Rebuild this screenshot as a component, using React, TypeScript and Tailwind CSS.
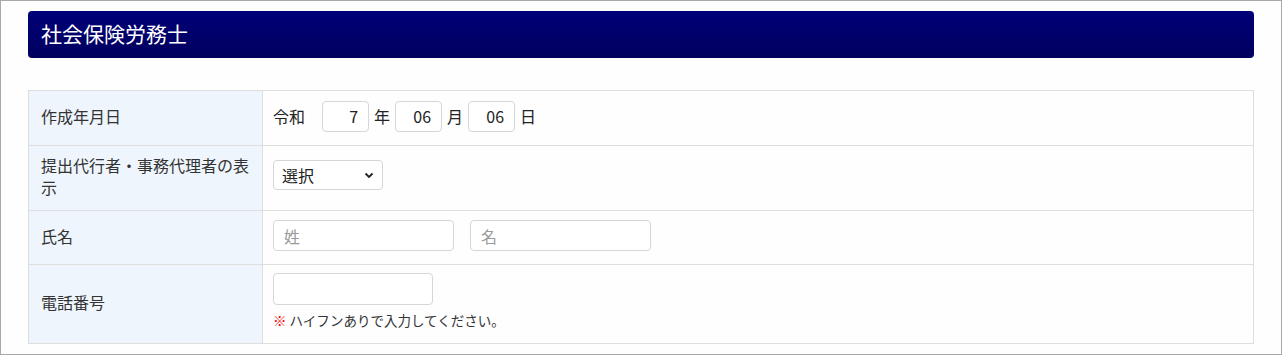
const FONT = "font-['Noto_Sans_CJK_JP','Noto_Sans',sans-serif]";

function Label({ children }: { children: React.ReactNode }) {
  return (
    <th className="w-[234px] border border-[#dedede] bg-[#eef5fc] pb-[4px] pl-[12px] pr-[11px] text-left align-middle text-[16px] font-normal leading-[22px] text-[#333]">
      {children}
    </th>
  );
}

function Box({ w, value, placeholder, right }: { w: string; value?: string; placeholder?: string; right?: boolean }) {
  return (
    <input
      readOnly
      value={value ?? ''}
      placeholder={placeholder}
      className={`${w} h-[31px] rounded-[4px] border border-[#d6d6d6] bg-white px-[10px] text-[16px] text-[#222] placeholder:text-[#9a9a9a] outline-none ${right ? 'text-right' : ''}`}
    />
  );
}

export default function App() {
  return (
    <div className={`${FONT} h-[355px] w-[1282px] border border-[#a8a8a8] bg-[#fefefe] px-[27px] pt-[10px]`}>
      <div className="flex h-[47px] items-center rounded-[4px] bg-gradient-to-b from-[#000078] to-[#00005e] px-[13px] pb-[2px] text-[21px] text-white">
        社会保険労務士
      </div>

      <table className="mt-[32px] w-full border-collapse text-[#222]">
        <tbody>
          <tr className="h-[55px]">
            <Label>作成年月日</Label>
            <td className="border border-[#dedede] px-[10px] pb-[4px] text-[16px]">
              <div className="flex items-center gap-[5px]">
                <span className="mr-[12px]">令和</span>
                <Box w="w-[47px]" value="7" right />
                <span>年</span>
                <Box w="w-[47px]" value="06" right />
                <span>月</span>
                <Box w="w-[47px]" value="06" right />
                <span>日</span>
              </div>
            </td>
          </tr>
          <tr className="h-[65px]">
            <Label>提出代行者・事務代理者の表示</Label>
            <td className="border border-[#dedede] px-[10px] pb-[6px]">
              <div className="flex h-[30px] w-[110px] items-center justify-between rounded-[4px] border border-[#d6d6d6] bg-white pl-[8px] pr-[8px] text-[16px]">
                <span>選択</span>
                <svg width="10" height="7" viewBox="0 0 10 7" fill="none">
                  <path d="M1.5 1.5L5 5L8.5 1.5" stroke="#222" strokeWidth="1.8" />
                </svg>
              </div>
            </td>
          </tr>
          <tr className="h-[54px]">
            <Label>氏名</Label>
            <td className="border border-[#dedede] px-[10px] pb-[4px]">
              <div className="flex gap-[16px]">
                <Box w="w-[181px]" placeholder="姓" />
                <Box w="w-[181px]" placeholder="名" />
              </div>
            </td>
          </tr>
          <tr className="h-[79px]">
            <Label>電話番号</Label>
            <td className="border border-[#dedede] px-[10px] align-top pt-[8px]">
              <div className="h-[32px] w-[160px] rounded-[4px] border border-[#d6d6d6] bg-white" />
              <p className="mt-[6px] text-[13.5px] leading-[18px] text-[#333]">
                <span className="font-bold text-[#ff0000]">※</span> ハイフンありで入力してください。
              </p>
            </td>
          </tr>
        </tbody>
      </table>
    </div>
  );
}
